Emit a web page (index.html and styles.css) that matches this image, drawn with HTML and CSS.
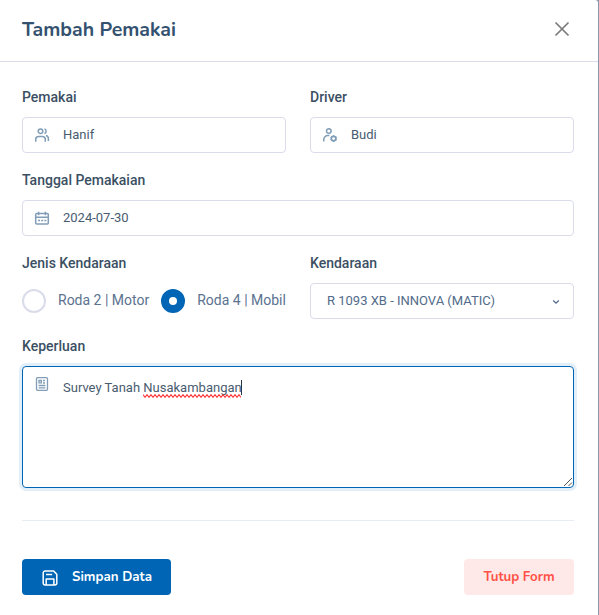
FILE: index.html
```html
<!DOCTYPE html>
<html lang="id">
<head>
<meta charset="utf-8">
<title>Tambah Pemakai</title>
<link rel="stylesheet" href="styles.css">
</head>
<body>
<div class="modal">
  <header class="modal-header">
    <h1 class="title">Tambah Pemakai</h1>
    <button class="close" type="button" aria-label="Tutup">
      <svg width="16" height="16" viewBox="0 0 16 16"><path d="M1.5 1.5 14.5 14.5M14.5 1.5 1.5 14.5"/></svg>
    </button>
  </header>
  <form class="form">
    <div class="row">
      <div class="field">
        <span class="label">Pemakai</span>
        <div class="input">
          <svg class="icon" viewBox="0 0 16 16"><circle cx="6.5" cy="4.2" r="2.3"/><path d="M1.7 14.7v-2.2a3 3 0 0 1 3-3h3.6a3 3 0 0 1 3 3v2.2M10.4 1.9a2.4 2.4 0 0 1 0 4.6M12 8.5c1.5.4 2.4 1.6 2.4 3.2v2.2"/></svg>
          <span>Hanif</span>
        </div>
      </div>
      <div class="field">
        <span class="label">Driver</span>
        <div class="input">
          <svg class="icon" viewBox="0 0 16 16"><circle cx="6.8" cy="4" r="2.3"/><path d="M1.8 14.5v-2a4 4 0 0 1 4-4h1.6"/><circle class="gear" cx="11.6" cy="11.6" r="2.3"/><path d="M11.6 8.3v1M11.6 13.9v1M8.7 10l.9.5M13.6 12.7l.9.5M8.7 13.2l.9-.5M13.6 10.5l.9-.5"/></svg>
          <span>Budi</span>
        </div>
      </div>
    </div>
    <div class="field">
      <span class="label">Tanggal Pemakaian</span>
      <div class="input">
        <svg class="icon" viewBox="0 0 16 16"><rect x="1.7" y="3.5" width="12.6" height="10.6" rx="1"/><path d="M4.6 1.7v3.6M11.4 1.7v3.6M2 7.3h12M4 10.4h2M7.2 10.4h2M10.4 10.4h2"/></svg>
        <span>2024-07-30</span>
      </div>
    </div>
    <div class="row">
      <div class="field">
        <span class="label">Jenis Kendaraan</span>
        <div class="radios">
          <span class="radio"></span><span class="radio-text first">Roda 2 | Motor</span>
          <span class="radio checked"></span><span class="radio-text">Roda 4 | Mobil</span>
        </div>
      </div>
      <div class="field">
        <span class="label">Kendaraan</span>
        <div class="input select">
          <span>R 1093 XB - INNOVA (MATIC)</span>
          <svg class="chevron" viewBox="0 0 8 6"><path d="M1.2 1.5 4 4.2 6.8 1.5"/></svg>
        </div>
      </div>
    </div>
    <div class="field">
      <span class="label">Keperluan</span>
      <div class="input area">
        <svg class="icon" viewBox="0 0 16 16"><rect x="2.5" y="1.7" width="11" height="12.6" rx="1.2"/><path d="M5 4.5h2.4v2.4H5zM9 4.5h2M9 7h2M4.6 9.5h6.8M4.6 11.8h6.8"/></svg>
        <span>Survey Tanah <span class="typo">Nusakambangan<svg class="wave" viewBox="0 0 98 4"><path d="M0 .7 2 3.3 4 .7 6 3.3 8 .7 10 3.3 12 .7 14 3.3 16 .7 18 3.3 20 .7 22 3.3 24 .7 26 3.3 28 .7 30 3.3 32 .7 34 3.3 36 .7 38 3.3 40 .7 42 3.3 44 .7 46 3.3 48 .7 50 3.3 52 .7 54 3.3 56 .7 58 3.3 60 .7 62 3.3 64 .7 66 3.3 68 .7 70 3.3 72 .7 74 3.3 76 .7 78 3.3 80 .7 82 3.3 84 .7 86 3.3 88 .7 90 3.3 92 .7 94 3.3 96 .7 98 3.3"/></svg></span><span class="caret"></span></span>
        <svg class="grip" viewBox="0 0 10 10"><path d="M1 9 9 1M5.5 9 9 5.5"/></svg>
      </div>
    </div>
    <hr class="rule">
    <div class="actions">
      <button class="btn save" type="button">
        <svg viewBox="0 0 18 18"><path d="M4.2 16.1a2 2 0 0 1-2-2V3.9a2 2 0 0 1 2-2h8.3l3.3 3.3v8.9a2 2 0 0 1-2 2zM5.2 16v-6.1h7.7V16M5 5.6h6.2"/></svg>
        <span>Simpan Data</span>
      </button>
      <button class="btn cancel" type="button">Tutup Form</button>
    </div>
  </form>
</div>
</body>
</html>
```
FILE: styles.css
```css
* { box-sizing: border-box; }
body {
  margin: 0;
  background: #8799ae;
  color: #485c70;
  font: 13px/20px Roboto, "Liberation Sans", sans-serif;
  overflow: hidden;
}
.modal {
  width: 598px;
  height: 615px;
  background: #fff;
  border-top-right-radius: 3px;
}
.modal-header {
  display: flex;
  align-items: center;
  justify-content: space-between;
  height: 62px;
  padding: 0 28px 4px 22px;
  border-bottom: 1px solid #dadcea;
}
.title {
  margin: 2px 0 0;
  color: #34516f;
  font: 700 19.5px/28px Nunito, "Noto Sans", sans-serif;
}
.close { display: flex; padding: 0; border: 0; background: none; }
.close path { fill: none; stroke: #7b7b7b; stroke-width: 1.7; }
.form { padding: 25px 24px 0 22px; }
.row { display: flex; gap: 24px; }
.field { flex: 1; min-width: 0; height: 83px; }
.label {
  display: block;
  height: 30px;
  color: #3b4f63;
  font-size: 14px;
  font-weight: 500;
  line-height: 20px;
}
.input {
  display: flex;
  align-items: center;
  height: 36px;
  padding: 0 12px 0 11px;
  border: 1px solid #dadcea;
  border-radius: 4px;
}
.icon {
  flex: none;
  width: 16px;
  height: 16px;
  margin: 0 13px 0 0;
  fill: none;
  stroke: #819db7;
  stroke-width: 1.5;
}
.gear { stroke-width: 1.7; }
.select { justify-content: space-between; padding: 0 13px 0 16px; color: #526b8a; }
.chevron { width: 8px; height: 6px; margin-top: 2px; fill: none; stroke: #526b8a; stroke-width: 1.3; }
.radios { display: flex; align-items: center; height: 36px; color: #5b7290; font-size: 14px; }
.radio {
  flex: none;
  width: 24px;
  height: 24px;
  border: 2px solid #dadcea;
  border-radius: 50%;
}
.radio.checked { border: 8px solid #0065b5; }
.radio-text { margin: 0 0 2px 12px; white-space: nowrap; }
.radio-text.first { margin-right: 12px; }
.area {
  position: relative;
  align-items: flex-start;
  height: 122px;
  padding-top: 11px;
  border-color: #0065b5;
  box-shadow: 0 0 0 3px #e3eff8;
}
.area .icon { margin-top: -2px; stroke-width: 1.3; }
.typo { position: relative; }
.wave { position: absolute; left: 0; bottom: -3px; width: 98px; height: 4px; fill: none; stroke: #f33; stroke-width: 1.1; }
.caret { display: inline-block; width: 1px; height: 15px; margin-left: -1px; background: #25384b; vertical-align: -3px; }
.grip { position: absolute; right: 0; bottom: 0; width: 10px; height: 10px; fill: none; stroke: #555; }
.rule { height: 1px; margin: 101px 0 38px; border: 0; background: #e8edf3; }
.actions { display: flex; justify-content: space-between; }
.btn {
  display: flex;
  align-items: center;
  justify-content: center;
  height: 36px;
  padding: 0 0 1px;
  border: 0;
  border-radius: 4px;
  font: 700 13.3px/20px Nunito, "Noto Sans", sans-serif;
}
.save { gap: 13px; width: 149px; background: #0065b5; color: #fff; }
.save svg { width: 18px; height: 18px; margin-top: 2px; fill: none; stroke: #fff; stroke-width: 1.5; stroke-linejoin: round; }
.cancel { width: 110px; background: #ffe9e8; color: #ff5146; }
```
